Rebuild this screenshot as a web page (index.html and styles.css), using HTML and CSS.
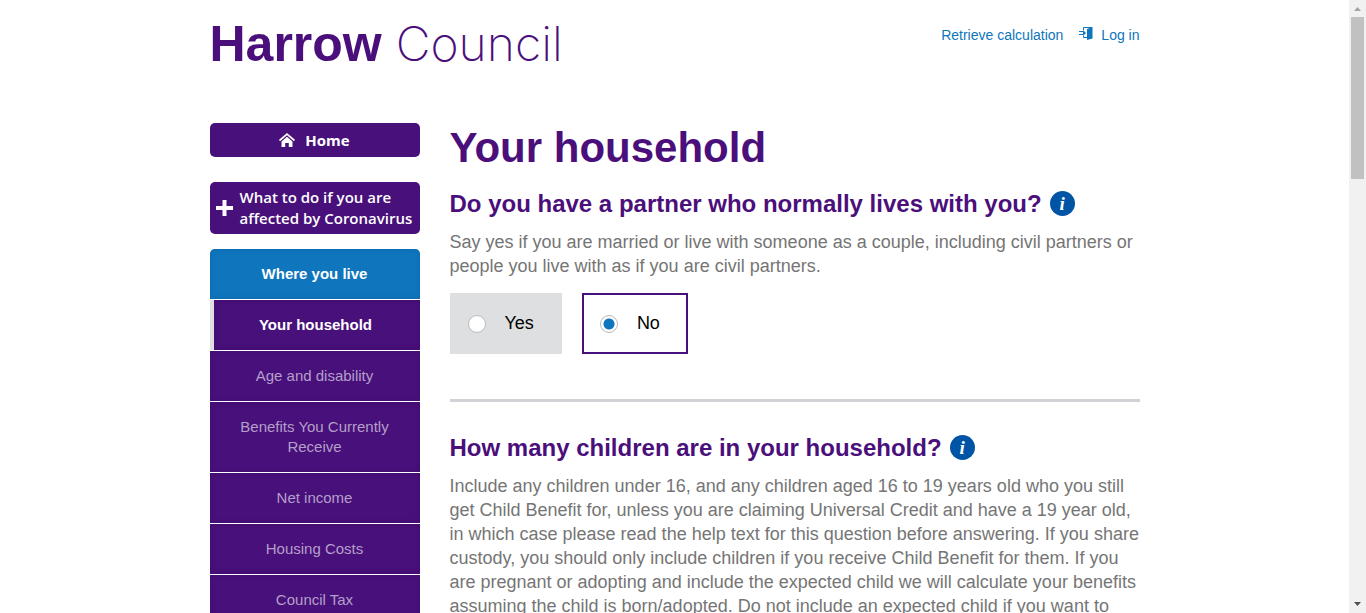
FILE: index.html
```html
<!DOCTYPE html>
<html lang="en">
<head>
<meta charset="utf-8">
<meta name="viewport" content="width=device-width, initial-scale=1">
<title>Your household - Harrow Council</title>
<link rel="stylesheet" href="styles.css">
</head>
<body>
<div class="viewport">
  <div class="page">
    <header class="header">
      <a class="logo" href="#"><span class="logo-bold">Harrow</span> <span class="logo-thin">Council</span></a>
      <nav class="account">
        <a href="#">Retrieve calculation</a>
        <a class="login" href="#">
          <svg class="login-icon" viewBox="0 0 14 14" aria-hidden="true"><path d="M4.500 4V1.500H13M4.500 10v1.500H8M0 5.500h4M0 8.500h4" fill="none" stroke="currentColor"/><path d="M8 3l5.500-2v11.500L8 14zM4 4l3 3-3 3z" fill="currentColor"/></svg>
          Log in
        </a>
      </nav>
    </header>
    <div class="columns">
      <aside class="sidebar">
        <a class="button home" href="#">
          <svg class="home-icon" viewBox="0 0 16 14" aria-hidden="true"><path d="M0 6.800L8 0l8 6.800-1 1.400L8 2.300 1 8.200zM2.500 8.400L8 3.700l5.500 4.700V14H9.800v-4H6.200v4H2.500z" fill="currentColor"/></svg>
          Home
        </a>
        <a class="button corona" href="#">
          <svg class="plus-icon" viewBox="0 0 17 17" aria-hidden="true"><path d="M6.500 0h4v6H17v4h-6.500v6h-4v-6H0V6h6.500z" fill="currentColor"/></svg>
          <span>What to do if you are affected by Coronavirus</span>
        </a>
        <nav class="steps">
          <a class="step done" href="#">Where you live</a>
          <a class="step current" href="#">Your household</a>
          <a class="step" href="#">Age and disability</a>
          <a class="step" href="#">Benefits You Currently Receive</a>
          <a class="step" href="#">Net income</a>
          <a class="step" href="#">Housing Costs</a>
          <a class="step" href="#">Council Tax</a>
        </nav>
      </aside>
      <main class="main">
        <h1 class="title">Your household</h1>
        <section class="question">
          <div class="question-head">
            <h2 class="subtitle" id="partner">Do you have a partner who normally lives with you?</h2>
            <button class="info" type="button" aria-label="Help">i</button>
          </div>
          <p class="hint">Say yes if you are married or live with someone as a couple, including civil partners or people you live with as if you are civil partners.</p>
          <div class="choices" role="radiogroup" aria-labelledby="partner">
            <label class="choice"><input class="radio" type="radio" name="partner">Yes</label>
            <label class="choice selected"><input class="radio" type="radio" name="partner" checked>No</label>
          </div>
        </section>
        <section class="question">
          <div class="question-head">
            <h2 class="subtitle">How many children are in your household?</h2>
            <button class="info" type="button" aria-label="Help">i</button>
          </div>
          <p class="hint">Include any children under 16, and any children aged 16 to 19 years old who you still get Child Benefit for, unless you are claiming Universal Credit and have a 19 year old, in which case please read the help text for this question before answering. If you share custody, you should only include children if you receive Child Benefit for them. If you are pregnant or adopting and include the expected child we will calculate your benefits assuming the child is born/adopted. Do not include an expected child if you want to</p>
        </section>
      </main>
    </div>
  </div>
  <div class="scrollbar" aria-hidden="true">
    <svg class="arrow up" viewBox="0 0 7 4"><path d="M0 4L3.500 0 7 4z" fill="currentColor"/></svg>
    <div class="track"><div class="thumb"></div></div>
    <svg class="arrow" viewBox="0 0 7 4"><path d="M0 0h7L3.500 4z" fill="currentColor"/></svg>
  </div>
</div>
</body>
</html>
```
FILE: styles.css
```css
* { box-sizing: border-box; }
body { margin: 0; background: #fff; font-family: "Liberation Sans", Arial, sans-serif; }
a { color: #0f75bc; text-decoration: none; }
.viewport { display: flex; height: 100vh; overflow: hidden; }
.page { flex: 1; min-width: 0; padding: 0 16px; overflow: hidden; }
.header, .columns { max-width: 930px; margin: 0 auto; }
.header { display: flex; justify-content: space-between; align-items: flex-start; height: 123px; padding-top: 14px; }
.logo { color: #4b0f7b; font-size: 50px; line-height: 60px; white-space: nowrap; }
.logo-bold { font-weight: 700; }
.logo-thin { font-family: Inter, "Liberation Sans", sans-serif; font-size: 48px; font-weight: 250; }
.account { display: flex; gap: 16px; padding-top: 12px; font-size: 14px; line-height: 18px; }
.login { display: flex; gap: 8px; }
.login-icon { width: 14px; height: 14px; }
.columns { display: flex; gap: 30px; }
.sidebar { flex: 0 0 210px; }
.button { display: flex; align-items: center; background: #48107a; color: #fff; border-radius: 5px; font-family: "Open Sans", "Noto Sans", sans-serif; font-size: 15px; line-height: 21px; }
.home { justify-content: center; gap: 10px; height: 34px; margin-bottom: 25px; font-weight: 700; }
.home-icon { width: 16px; height: 14px; }
.corona { gap: 7px; padding: 5px 0 5px 6px; margin-bottom: 15px; font-weight: 600; }
.plus-icon { flex: none; width: 17px; height: 17px; }
.steps { display: flex; flex-direction: column; gap: 1px; }
.step { padding: 15px 20px; background: #48107a; color: #b59fca; font-size: 15px; line-height: 20px; text-align: center; box-shadow: inset 0 0 5px #3f0d6c; }
.done { background: #0f75bc; color: #fff; font-weight: 700; border-radius: 5px 5px 0 0; box-shadow: inset 0 0 5px #0d69aa; }
.current { border-left: 4px solid #dedfe1; padding-left: 18px; color: #fff; font-weight: 700; }
.main { flex: 1; min-width: 0; }
.title { margin: 0 0 16px; color: #4b0f7b; font-size: 42px; line-height: 50px; }
.question { padding-bottom: 45px; margin-bottom: 31px; border-bottom: 3px solid #d1d2d6; }
.question-head { display: flex; align-items: flex-start; gap: 8px; margin-bottom: 11px; }
.subtitle { margin: 0; color: #4b0f7b; font-size: 24px; line-height: 30px; }
.info { width: 25px; height: 25px; margin: 2px 0 0; padding: 0; border: 0; border-radius: 50%; background: #0054a6; color: #fff; font: italic 700 19px/25px "Liberation Serif", serif; }
.hint { margin: 0 0 15px; color: #757575; font-size: 18px; line-height: 24px; }
.choices { display: flex; gap: 20px; }
.choice { display: flex; align-items: center; gap: 19px; height: 61px; padding: 0 28px 0 18px; background: #dedfe1; color: #000; font-size: 18px; }
.selected { padding: 0 26px 0 16px; border: 2px solid #48107a; background: #fff; }
.radio { appearance: none; width: 18px; height: 18px; margin: 0; border: 1px solid #bbb; border-radius: 50%; background: #fff; }
.radio:checked { background: radial-gradient(circle, #0f75bc 5px, #fff 6px); }
.scrollbar { display: flex; flex: 0 0 17px; flex-direction: column; align-items: center; justify-content: space-between; padding: 7px 0; background: #f1f1f1; color: #505050; }
.arrow { width: 7px; height: 4px; }
.up { color: #a3a3a3; }
.track { flex: 1; width: 13px; padding: 6px 0; }
.thumb { height: 28%; background: #c1c1c1; }
```
